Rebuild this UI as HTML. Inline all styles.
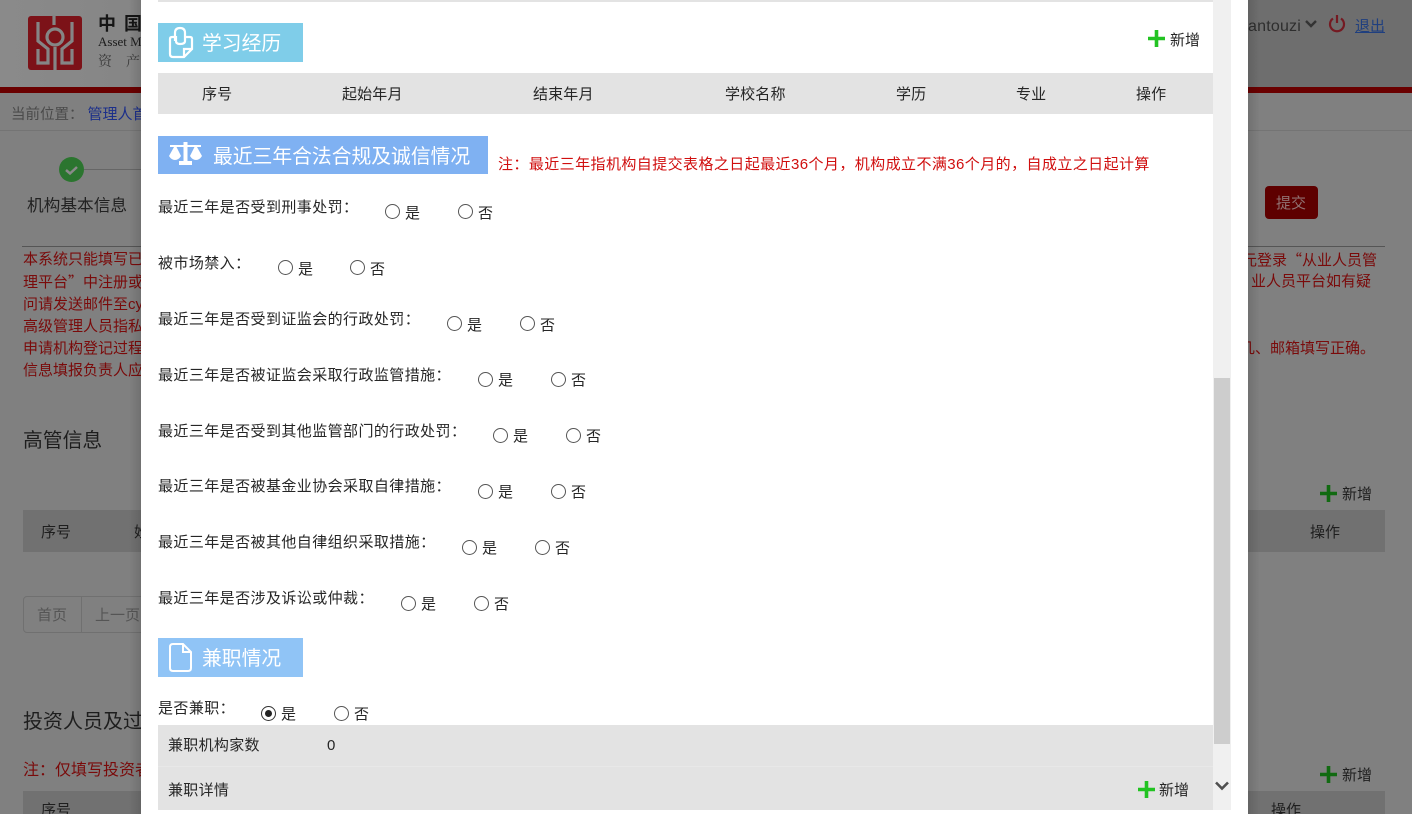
<!DOCTYPE html>
<html lang="zh-CN"><head><meta charset="utf-8"><title>资产管理</title>
<style>
html,body{margin:0;padding:0;width:1412px;height:814px;overflow:hidden;background:#808080}
body{position:relative;font-family:"Liberation Sans","Noto Sans CJK SC",sans-serif;font-size:15px;color:#1f1f1f}
.a{position:absolute;white-space:nowrap;line-height:20px;margin-top:1px}
.r{color:#7a0a0a}
.q{font-family:"Noto Sans CJK SC",sans-serif}
.bg{color:#1e1e1e}
.box{position:absolute}
.radio{position:absolute;width:13px;height:13px;border:1px solid #555;border-radius:50%;background:#fff;box-sizing:content-box}
.modal .a{color:#262626}
.th{top:84px;letter-spacing:.15px}
.l{letter-spacing:.42px}
.hd{color:#fff!important;font-size:19.8px;line-height:28px}
</style></head><body>
<!-- background page (dimmed) -->
<div class="box" style="left:0;top:0;width:1412px;height:87px;background:linear-gradient(90deg,#8a8a8a 0,#6f6f6f 60%,#6e6e6e 100%)"></div>
<div class="box" style="left:0;top:87px;width:1412px;height:6px;background:#6a0000"></div>
<svg class="box" style="left:28px;top:15px" width="54" height="55" viewBox="0 0 54 55">
<rect x="0" y="1" width="54" height="54" rx="3" fill="#7c1218"/>
<g fill="none" stroke="#858585" stroke-width="3.2">
<circle cx="27" cy="22" r="8"/>
<path d="M26 0V10M27 32V55M10 7V26L20 34V48H10V34M44 7V26L34 34V48H44V34"/>
</g>
<rect x="24" y="19" width="6" height="6" fill="#7c1218"/>
</svg>
<div class="a" style="left:98px;top:13px;font-size:18px;font-weight:bold;letter-spacing:8px;color:#151515">中国</div>
<div class="a" style="left:98px;top:31px;font-family:'Liberation Serif',serif;font-size:13px;color:#1c1c1c">Asset Ma</div>
<div class="a" style="left:98px;top:50px;font-family:'Noto Serif CJK SC',serif;font-size:14px;letter-spacing:14px;color:#3a3a3a">资产</div>
<div class="a" style="left:1248px;top:16px;color:#2e2e2e;font-size:16px;letter-spacing:.2px">antouzi</div>
<svg class="box" style="left:1304px;top:19px" width="14" height="10" viewBox="0 0 14 10"><path d="M2 2L7 7L12 2" fill="none" stroke="#333" stroke-width="2.4"/></svg>
<svg class="box" style="left:1328px;top:14px" width="18" height="19" viewBox="0 0 18 19"><path d="M5 4.500A7 7 0 1 0 13 4.500M9 1V9" fill="none" stroke="#741a22" stroke-width="2.200"/></svg>
<div class="a" style="left:1355px;top:16px;color:#1f3f7f;text-decoration:underline">退出</div>
<div class="a" style="left:11px;top:104px;font-size:14.5px;color:#4a4a4a">当前位置：<span style="color:#1c2f8a;margin-left:4px;font-size:15px">管理人首</span></div>
<div class="box" style="left:0;top:130px;width:1412px;height:1px;background:#747474"></div>
<div class="box" style="left:59px;top:157px;width:25px;height:25px;border-radius:50%;background:#2b752f"></div>
<svg class="box" style="left:59px;top:157px" width="25" height="25"><path d="M7 13L11 16.500L18 10" fill="none" stroke="#8a8a8a" stroke-width="2.500"/></svg>
<div class="box" style="left:84px;top:169px;width:60px;height:1px;background:#666"></div>
<div class="a" style="left:27px;top:195px;font-size:16.7px;color:#222">机构基本信息</div>
<div class="box" style="left:1265px;top:186px;width:53px;height:33px;background:#5e0000;border-radius:4px"></div>
<div class="a" style="left:1276px;top:193px;color:#917272">提交</div>
<div class="box" style="left:22px;top:246px;width:1363px;height:1px;background:#555"></div>
<div class="a r" style="left:23px;top:249px">本系统只能填写已</div>
<div class="a r q" style="left:23px;top:271px">理平台”中注册或</div>
<div class="a r" style="left:23px;top:294px">问请发送邮件至cy</div>
<div class="a r" style="left:23px;top:316px">高级管理人员指私</div>
<div class="a r" style="left:23px;top:338px">申请机构登记过程</div>
<div class="a r" style="left:23px;top:360px">信息填报负责人应</div>
<div class="a r q" style="left:1242px;top:249px">元登录“从业人员管</div>
<div class="a r" style="left:1251px;top:271px">业人员平台如有疑</div>
<div class="a r" style="left:1240px;top:338px">几、邮箱填写正确。</div>
<div class="a bg" style="left:23px;top:428px;font-size:19.8px;line-height:24px">高管信息</div>
<div class="box" style="left:23px;top:510px;width:1362px;height:42px;background:#717171"></div>
<div class="a bg" style="left:41px;top:522px">序号</div>
<div class="a bg" style="left:134px;top:522px">姓</div>
<div class="a bg" style="left:1310px;top:522px">操作</div>
<div class="box" style="left:23px;top:596px;width:140px;height:35px;border:1px solid #707070;border-radius:4px"></div>
<div class="box" style="left:81px;top:596px;width:1px;height:37px;background:#707070"></div>
<div class="a" style="left:37px;top:605px;color:#555">首页</div>
<div class="a" style="left:95px;top:605px;color:#555">上一页</div>
<div class="a bg" style="left:23px;top:709px;font-size:20px;line-height:24px">投资人员及过</div>
<div class="a r" style="left:23px;top:760px;font-size:16px">注：仅填写投资者</div>
<div class="box" style="left:23px;top:791px;width:1362px;height:23px;background:#717171"></div>
<div class="a bg" style="left:41px;top:800px">序号</div>
<div class="a bg" style="left:1271px;top:800px">操作</div>
<svg class="box" style="left:1320px;top:485px" width="17" height="17"><path d="M8.500 0V17M0 8.500H17" stroke="#116a11" stroke-width="3.600"/></svg>
<div class="a bg" style="left:1342px;top:484px">新增</div>
<svg class="box" style="left:1320px;top:766px" width="17" height="17"><path d="M8.500 0V17M0 8.500H17" stroke="#116a11" stroke-width="3.600"/></svg>
<div class="a bg" style="left:1342px;top:765px">新增</div>

<!-- shadow -->
<div class="box" style="left:129px;top:0;width:12px;height:814px;background:linear-gradient(90deg,rgba(0,0,0,0),rgba(0,0,0,.12))"></div>
<div class="box" style="left:1248px;top:0;width:12px;height:814px;background:linear-gradient(270deg,rgba(0,0,0,0),rgba(0,0,0,.12))"></div>

<!-- modal -->
<div class="box modal" style="left:141px;top:0;width:1107px;height:814px;background:#fff"></div>
<div class="modal">
<div class="box" style="left:158px;top:0;width:1055px;height:2px;background:#e3e3e3"></div>
<div class="box" style="left:158px;top:23px;width:145px;height:39px;background:#7fcde9"></div>
<svg class="box" style="left:168px;top:26px" width="26" height="33" viewBox="0 0 26 33"><path d="M7 11H4Q2 11 2 13V28Q2 31 5 31H16L24 23V13Q24 11 22 11H18M16 31V23H24M7 15V7Q7 2 12 2Q17 2 17 7V15Q17 18 12 18Q8 18 8 15V10" fill="none" stroke="#fff" stroke-width="2.200"/></svg>
<div class="a hd" style="left:202px;top:29px">学习经历</div>
<svg class="box" style="left:1148px;top:30px" width="17" height="17"><path d="M8.500 0V17M0 8.500H17" stroke="#22c322" stroke-width="3.600"/></svg>
<div class="a" style="left:1170px;top:30px">新增</div>
<div class="box" style="left:158px;top:73px;width:1055px;height:41px;background:#e3e3e3"></div>
<div class="a th" style="left:202px">序号</div>
<div class="a th" style="left:342px">起始年月</div>
<div class="a th" style="left:533px">结束年月</div>
<div class="a th" style="left:725px">学校名称</div>
<div class="a th" style="left:896px">学历</div>
<div class="a th" style="left:1016px">专业</div>
<div class="a th" style="left:1136px">操作</div>

<div class="box" style="left:158px;top:136px;width:330px;height:38px;background:#7fb1f2"></div>
<svg class="box" style="left:168px;top:141px" width="35" height="25" viewBox="0 0 35 25"><path fill="#fff" d="M15.500 1H19.500V4H33V6H29L34 15Q31.500 19 28 19Q24.500 19 22 15L26.500 6H19.500V20H24V24H11V20H15.500V6H8.500L13 15Q10.500 19 7 19Q3.500 19 1 15L6 6H2V4H15.500Z"/></svg>
<div class="a hd" style="left:213px;top:142px">最近三年合法合规及诚信情况</div>
<div class="a l" style="left:498px;top:154px"><span style="color:#d00f0f">注：最近三年指机构自提交表格之日起最近36个月，机构成立不满36个月的，自成立之日起计算</span></div>

<div class="a l" style="left:158px;top:197px">最近三年是否受到刑事处罚：</div>
<div class="radio" style="left:385px;top:204px"></div><div class="a" style="left:405px;top:203px">是</div>
<div class="radio" style="left:458px;top:204px"></div><div class="a" style="left:478px;top:203px">否</div>

<div class="a l" style="left:158px;top:253px">被市场禁入：</div>
<div class="radio" style="left:278px;top:260px"></div><div class="a" style="left:298px;top:259px">是</div>
<div class="radio" style="left:350px;top:260px"></div><div class="a" style="left:370px;top:259px">否</div>

<div class="a l" style="left:158px;top:309px">最近三年是否受到证监会的行政处罚：</div>
<div class="radio" style="left:447px;top:316px"></div><div class="a" style="left:467px;top:315px">是</div>
<div class="radio" style="left:520px;top:316px"></div><div class="a" style="left:540px;top:315px">否</div>

<div class="a l" style="left:158px;top:365px">最近三年是否被证监会采取行政监管措施：</div>
<div class="radio" style="left:478px;top:372px"></div><div class="a" style="left:498px;top:370px">是</div>
<div class="radio" style="left:551px;top:372px"></div><div class="a" style="left:571px;top:370px">否</div>

<div class="a l" style="left:158px;top:421px">最近三年是否受到其他监管部门的行政处罚：</div>
<div class="radio" style="left:493px;top:428px"></div><div class="a" style="left:513px;top:426px">是</div>
<div class="radio" style="left:566px;top:428px"></div><div class="a" style="left:586px;top:426px">否</div>

<div class="a l" style="left:158px;top:476px">最近三年是否被基金业协会采取自律措施：</div>
<div class="radio" style="left:478px;top:484px"></div><div class="a" style="left:498px;top:482px">是</div>
<div class="radio" style="left:551px;top:484px"></div><div class="a" style="left:571px;top:482px">否</div>

<div class="a l" style="left:158px;top:532px">最近三年是否被其他自律组织采取措施：</div>
<div class="radio" style="left:462px;top:540px"></div><div class="a" style="left:482px;top:538px">是</div>
<div class="radio" style="left:535px;top:540px"></div><div class="a" style="left:555px;top:538px">否</div>

<div class="a l" style="left:158px;top:588px">最近三年是否涉及诉讼或仲裁：</div>
<div class="radio" style="left:401px;top:596px"></div><div class="a" style="left:421px;top:594px">是</div>
<div class="radio" style="left:474px;top:596px"></div><div class="a" style="left:494px;top:594px">否</div>

<div class="box" style="left:158px;top:638px;width:145px;height:39px;background:#90c4f6"></div>
<svg class="box" style="left:168px;top:642px" width="25" height="31" viewBox="0 0 25 31"><path d="M5 2H15L23 10V26Q23 29 20 29H5Q2 29 2 26V5Q2 2 5 2ZM15 2V10H23" fill="none" stroke="#fff" stroke-width="2"/></svg>
<div class="a hd" style="left:202px;top:644px">兼职情况</div>

<div class="a l" style="left:158px;top:698px">是否兼职：</div>
<div class="radio" style="left:261px;top:706px;border-color:#333"></div>
<div class="box" style="left:265px;top:710px;width:7px;height:7px;border-radius:50%;background:#222"></div>
<div class="a" style="left:281px;top:704px">是</div>
<div class="radio" style="left:334px;top:706px"></div><div class="a" style="left:354px;top:704px">否</div>

<div class="box" style="left:158px;top:725px;width:1055px;height:85px;background:#e3e3e3"></div>
<div class="box" style="left:158px;top:766px;width:1055px;height:1px;background:#e8e8e8"></div>
<div class="a" style="left:168px;top:735px;letter-spacing:.3px">兼职机构家数</div>
<div class="a" style="left:327px;top:735px">0</div>
<div class="a" style="left:168px;top:780px;letter-spacing:.3px">兼职详情</div>
<svg class="box" style="left:1138px;top:781px" width="17" height="17"><path d="M8.500 0V17M0 8.500H17" stroke="#22c322" stroke-width="3.600"/></svg>
<div class="a" style="left:1159px;top:780px">新增</div>

<div class="box" style="left:1213px;top:0;width:18px;height:810px;background:#f0f0f0"></div>
<div class="box" style="left:1214px;top:378px;width:16px;height:366px;background:#cdcdcd"></div>
<svg class="box" style="left:1214px;top:780px" width="16" height="12" viewBox="0 0 16 12"><path d="M2 2.500L8 8.500L14 2.500" fill="none" stroke="#505050" stroke-width="2.600"/></svg>
</div>
</body></html>
